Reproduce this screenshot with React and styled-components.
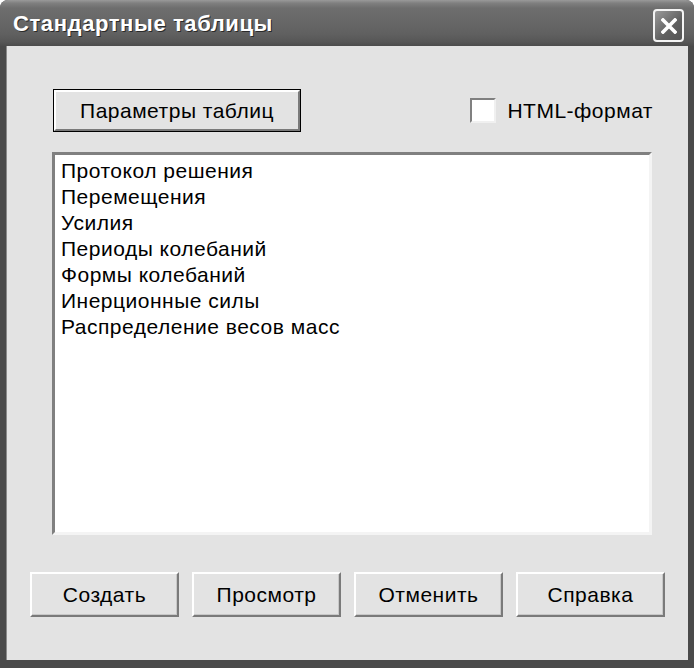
import React from "react";
import styled, { createGlobalStyle } from "styled-components";

const GlobalStyle = createGlobalStyle`
  html, body {
    margin: 0;
    padding: 0;
    background: #ffffff;
  }
  body {
    font-family: "Liberation Sans", Arial, sans-serif;
  }
`;

const Window = styled.div`
  width: 694px;
  height: 668px;
  display: flex;
  flex-direction: column;
  background: #4a4a4a;
  border-radius: 8px 8px 0 0;
  overflow: hidden;
`;

const TitleBar = styled.div`
  height: 46px;
  flex: none;
  display: flex;
  align-items: center;
  justify-content: space-between;
  padding: 0 10px 0 13px;
  background: linear-gradient(
    to bottom,
    #9a9a9a 0px,
    #808080 3px,
    #6e6e6e 8px,
    #686868 20px,
    #606060 34px,
    #565656 42px,
    #4c4c4c 46px
  );
`;

const Title = styled.span`
  color: #ffffff;
  font-weight: bold;
  font-size: 22px;
  letter-spacing: 0.6px;
  text-shadow: 1px 1px 0 #2a2a2a;
  margin-top: 2px;
`;

const CloseButton = styled.div`
  width: 27px;
  height: 29px;
  border: 2px solid #f4f4f4;
  border-radius: 4px;
  display: flex;
  align-items: center;
  justify-content: center;
  background: linear-gradient(135deg, #9a9a9a, #606060 60%, #555555);
  margin-top: 5px;
`;

const Body = styled.div`
  flex: 1;
  display: flex;
  flex-direction: column;
  background: #e3e3e3;
  margin: 0 6px 8px 6px;
  padding-top: 44px;
  box-shadow: inset 1px 0 0 #8a8a8a;
`;

const TopRow = styled.div`
  display: flex;
  align-items: center;
  justify-content: space-between;
  padding: 0 35px 0 48px;
  height: 41px;
`;

const Button = styled.button`
  width: ${({ $w }) => $w}px;
  height: ${({ $h }) => $h}px;
  font-family: "Liberation Sans", Arial, sans-serif;
  font-size: 21px;
  letter-spacing: 0.5px;
  color: #000000;
  background: #e3e3e3;
  padding: 0;
  margin: 0;
  border-style: solid;
  border-width: 2px;
  border-color: #ffffff #7a7a7a #7a7a7a #ffffff;
  outline: ${({ $default }) => ($default ? "1px solid #000000" : "none")};
  box-shadow: ${({ $default }) =>
    $default ? "none" : "inset -1px -1px 0 #c8c8c8"};
`;

const CheckLabel = styled.label`
  display: flex;
  align-items: center;
  gap: 11px;
  font-size: 21px;
  letter-spacing: 0.5px;
  color: #000000;
`;

const CheckBox = styled.span`
  width: 22px;
  height: 21px;
  background: #ffffff;
  border-style: solid;
  border-width: 2px;
  border-color: #808080 #f0f0f0 #f0f0f0 #808080;
`;

const ListBox = styled.div`
  margin: 21px 0 0 46px;
  width: 600px;
  height: 383px;
  box-sizing: border-box;
  background: #ffffff;
  border-style: solid;
  border-width: 3px;
  border-color: #808080 #f4f4f4 #f4f4f4 #808080;
  padding: 3px 0 0 6px;
`;

const ListItem = styled.div`
  font-size: 21px;
  letter-spacing: 0.5px;
  line-height: 26px;
  color: #000000;
  white-space: nowrap;
`;

const ButtonRow = styled.div`
  display: flex;
  gap: 13px;
  padding-left: 24px;
  margin-top: 37px;
`;

const items = [
  "Протокол решения",
  "Перемещения",
  "Усилия",
  "Периоды колебаний",
  "Формы колебаний",
  "Инерционные силы",
  "Распределение весов масс",
];

const actions = ["Создать", "Просмотр", "Отменить", "Справка"];

export default function App() {
  return (
    <>
      <GlobalStyle />
      <Window>
        <TitleBar>
          <Title>Стандартные таблицы</Title>
          <CloseButton>
            <svg width="16" height="16" viewBox="0 0 16 16">
              <path
                d="M2 2 L14 14 M14 2 L2 14"
                stroke="#ffffff"
                strokeWidth="3.6"
                strokeLinecap="square"
              />
            </svg>
          </CloseButton>
        </TitleBar>
        <Body>
          <TopRow>
            <Button $w={246} $h={41} $default>
              Параметры таблиц
            </Button>
            <CheckLabel>
              <CheckBox />
              HTML-формат
            </CheckLabel>
          </TopRow>
          <ListBox>
            {items.map((t) => (
              <ListItem key={t}>{t}</ListItem>
            ))}
          </ListBox>
          <ButtonRow>
            {actions.map((a) => (
              <Button key={a} $w={149} $h={45}>
                {a}
              </Button>
            ))}
          </ButtonRow>
        </Body>
      </Window>
    </>
  );
}
